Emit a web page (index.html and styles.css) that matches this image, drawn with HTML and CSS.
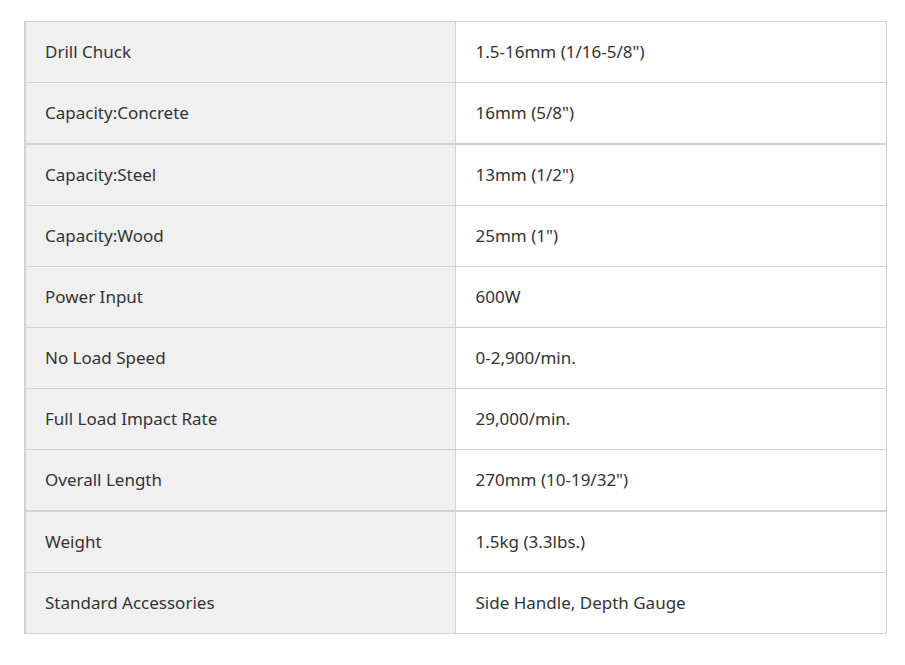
FILE: index.html
```html
<!DOCTYPE html>
<html>
<head>
<meta charset="utf-8">
<link rel="stylesheet" href="styles.css">
</head>
<body>
<table class="spec">
  <tbody>
    <tr><td class="k">Drill Chuck</td><td class="v">1.5-16mm (1/16-5/8")</td></tr>
    <tr><td class="k">Capacity:Concrete</td><td class="v">16mm (5/8")</td></tr>
    <tr class="thick"><td class="k">Capacity:Steel</td><td class="v">13mm (1/2")</td></tr>
    <tr><td class="k">Capacity:Wood</td><td class="v">25mm (1")</td></tr>
    <tr><td class="k">Power Input</td><td class="v">600W</td></tr>
    <tr><td class="k">No Load Speed</td><td class="v">0-2,900/min.</td></tr>
    <tr><td class="k">Full Load Impact Rate</td><td class="v">29,000/min.</td></tr>
    <tr><td class="k">Overall Length</td><td class="v">270mm (10-19/32")</td></tr>
    <tr class="thick"><td class="k">Weight</td><td class="v">1.5kg (3.3lbs.)</td></tr>
    <tr><td class="k">Standard Accessories</td><td class="v">Side Handle, Depth Gauge</td></tr>
  </tbody>
</table>
</body>
</html>
```
FILE: styles.css
```css
html, body { margin: 0; padding: 0; background: #fff; }
body { padding: 21px 0 0 24px; }
.spec {
  border-collapse: collapse;
  width: 863px;
  font-family: "Noto Sans", sans-serif;
  font-size: 17px;
  color: #333;
  border-left: 2px solid #d2d2d2;
}
.spec td {
  border: 1px solid #d2d2d2;
  height: 61px;
  padding: 0 0 1px 19px;
  box-sizing: border-box;
  vertical-align: middle;
}
.spec td.k { width: 430px; background: #f0f0f0; }
.spec td.v { background: #fff; padding-left: 20px; }
.spec tr.thick td { border-top: 2px solid #d2d2d2; height: 62px; padding-top: 1px; }
```
